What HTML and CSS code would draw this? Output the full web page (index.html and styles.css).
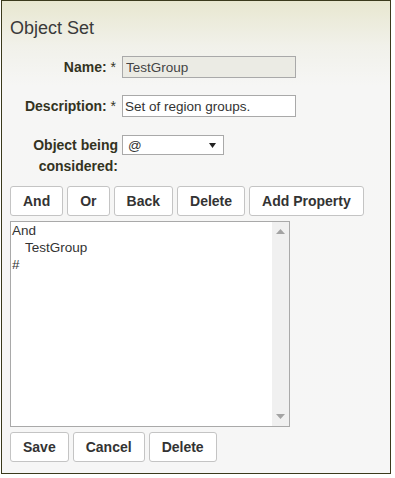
FILE: index.html
```html
<!DOCTYPE html>
<html>
<head>
<meta charset="utf-8">
<title>Object Set</title>
<link rel="stylesheet" href="styles.css">
</head>
<body>
<div class="panel">
  <h1 class="title">Object Set</h1>
  <div class="form">
    <div class="lbl"><b>Name:</b> *</div>
    <input class="field field-disabled" type="text" value="TestGroup" disabled>
    <div class="lbl"><b>Description:</b> *</div>
    <input class="field" type="text" value="Set of region groups.">
    <div class="lbl lbl-multi"><b>Object being<br>considered:</b></div>
    <div class="select-box"><span class="select-value">@</span><svg class="select-arrow" width="7" height="5" viewBox="0 0 7 5"><polygon points="0,0 7,0 3.5,5" fill="#222"/></svg></div>
  </div>
  <div class="toolbar">
    <button class="btn">And</button>
    <button class="btn">Or</button>
    <button class="btn">Back</button>
    <button class="btn">Delete</button>
    <button class="btn">Add Property</button>
  </div>
  <div class="editor">
    <div class="editor-text">
      <div class="line">And</div>
      <div class="line indent">TestGroup</div>
      <div class="line">#</div>
    </div>
    <div class="scrollbar">
      <svg class="sb-arrow" width="9" height="5" viewBox="0 0 9 5"><polygon points="4.5,0 9,5 0,5" fill="#a3a3a3"/></svg>
      <svg class="sb-arrow" width="9" height="5" viewBox="0 0 9 5"><polygon points="0,0 9,0 4.5,5" fill="#a3a3a3"/></svg>
    </div>
  </div>
  <div class="actions">
    <button class="btn">Save</button>
    <button class="btn">Cancel</button>
    <button class="btn">Delete</button>
  </div>
</div>
</body>
</html>
```

FILE: styles.css
```css
* { box-sizing: border-box; }

html, body {
  margin: 0;
  padding: 0;
  background: #ffffff;
}

body {
  font-family: "Liberation Sans", Arial, sans-serif;
  color: #333333;
}

.panel {
  margin-left: 1px;
  width: 390px;
  height: 474px;
  border: 1px solid #3b3a1c;
  background: linear-gradient(to bottom, #e8e7d0 0px, #f1f1ea 45px, #f6f6f5 85px, #f6f6f6 100%);
  padding: 16px 8px 0 8px;
}

.title {
  margin: 0;
  font-size: 18px;
  line-height: 22px;
  font-weight: normal;
  color: #3a3a3a;
}

.form {
  margin-top: 17px;
  display: grid;
  grid-template-columns: 108px 174px;
  column-gap: 4px;
  row-gap: 17px;
  align-items: center;
}

.lbl {
  text-align: right;
  font-size: 14px;
  line-height: 21px;
  color: #33331f;
  padding-right: 2px;
}

.lbl b { font-weight: bold; }

.lbl-multi {
  align-self: start;
  margin-top: 1px;
  padding-right: 0;
}

.field {
  width: 174px;
  height: 22px;
  margin: 0;
  border: 1px solid #a9a9a9;
  border-radius: 0;
  padding: 0 2px;
  font-family: "Liberation Sans", Arial, sans-serif;
  font-size: 13.5px;
  color: #333333;
  background: #ffffff;
  outline: none;
}

.field-disabled {
  background: #ebebe4;
  color: #444444;
  padding-left: 3px;
  -webkit-text-fill-color: #444444;
  opacity: 1;
}

.select-box {
  align-self: start;
  margin-top: 1px;
  width: 102px;
  height: 20px;
  border: 1px solid #a9a9a9;
  background: #ffffff;
  display: flex;
  align-items: center;
  justify-content: space-between;
  padding: 0 7px 0 5px;
  font-size: 13.5px;
  color: #333333;
}

.select-arrow { display: block; }

.toolbar, .actions {
  display: flex;
  gap: 4px;
}

.toolbar { margin-top: 9px; }

.actions { margin-top: 5px; }

.btn {
  height: 30px;
  margin: 0;
  padding: 0 12px;
  border: 1px solid #c4c4c4;
  border-radius: 3px;
  background: #ffffff;
  font-family: "Liberation Sans", Arial, sans-serif;
  font-size: 14px;
  font-weight: bold;
  color: #333333;
}

.editor {
  margin-top: 5px;
  width: 280px;
  height: 206px;
  border: 1px solid #a9a9a9;
  background: #ffffff;
  display: flex;
}

.editor-text {
  flex: 1;
  padding: 0 0 0 1px;
  font-size: 13.5px;
  line-height: 17px;
  color: #333333;
}

.indent { padding-left: 13px; }

.scrollbar {
  width: 17px;
  background: #f0f0f0;
  display: flex;
  flex-direction: column;
  justify-content: space-between;
  align-items: center;
  padding: 7px 0 7px 0;
}

.sb-arrow { display: block; }
```
